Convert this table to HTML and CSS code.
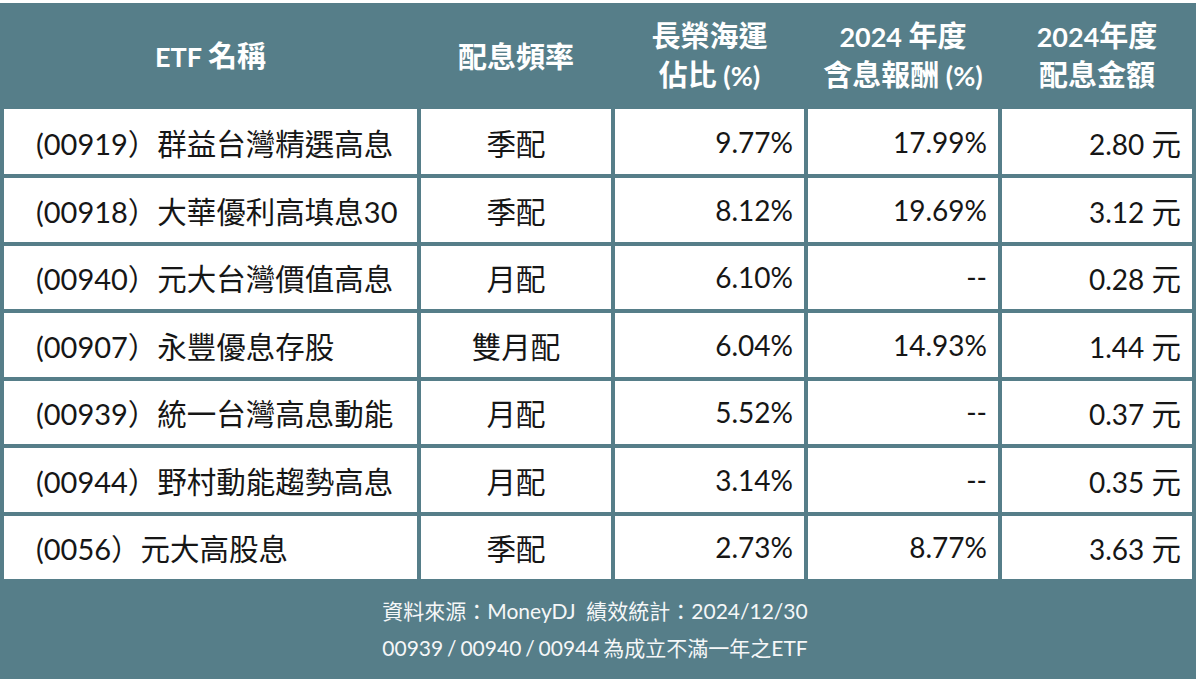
FILE: index.html
```html
<!DOCTYPE html>
<html lang="zh-Hant">
<head>
<meta charset="utf-8">
<title>ETF 配息比較</title>
<link rel="stylesheet" href="styles.css">
</head>
<body>
<div class="board">
  <div class="grid">
    <div class="hd"><span>ETF <span class="k">名稱</span></span></div>
    <div class="hd"><span class="k">配息頻率</span></div>
    <div class="hd"><span><span class="k">長榮海運</span><br><span class="k">佔比</span> (%)</span></div>
    <div class="hd"><span>2024 <span class="k">年度</span><br><span class="k">含息報酬</span> (%)</span></div>
    <div class="hd"><span>2024<span class="k">年度</span><br><span class="k">配息金額</span></span></div>

    <div class="c name"><span>(00919<span class="k">）群益台灣精選高息</span></span></div>
    <div class="c mid"><span class="k">季配</span></div>
    <div class="c num"><span>9.77%</span></div>
    <div class="c num"><span>17.99%</span></div>
    <div class="c num"><span>2.80 <span class="k">元</span></span></div>

    <div class="c name"><span>(00918<span class="k">）大華優利高填息</span>30</span></div>
    <div class="c mid"><span class="k">季配</span></div>
    <div class="c num"><span>8.12%</span></div>
    <div class="c num"><span>19.69%</span></div>
    <div class="c num"><span>3.12 <span class="k">元</span></span></div>

    <div class="c name"><span>(00940<span class="k">）元大台灣價值高息</span></span></div>
    <div class="c mid"><span class="k">月配</span></div>
    <div class="c num"><span>6.10%</span></div>
    <div class="c num"><span>--</span></div>
    <div class="c num"><span>0.28 <span class="k">元</span></span></div>

    <div class="c name"><span>(00907<span class="k">）永豐優息存股</span></span></div>
    <div class="c mid"><span class="k">雙月配</span></div>
    <div class="c num"><span>6.04%</span></div>
    <div class="c num"><span>14.93%</span></div>
    <div class="c num"><span>1.44 <span class="k">元</span></span></div>

    <div class="c name"><span>(00939<span class="k">）統一台灣高息動能</span></span></div>
    <div class="c mid"><span class="k">月配</span></div>
    <div class="c num"><span>5.52%</span></div>
    <div class="c num"><span>--</span></div>
    <div class="c num"><span>0.37 <span class="k">元</span></span></div>

    <div class="c name"><span>(00944<span class="k">）野村動能趨勢高息</span></span></div>
    <div class="c mid"><span class="k">月配</span></div>
    <div class="c num"><span>3.14%</span></div>
    <div class="c num"><span>--</span></div>
    <div class="c num"><span>0.35 <span class="k">元</span></span></div>

    <div class="c name"><span>(0056<span class="k">）元大高股息</span></span></div>
    <div class="c mid"><span class="k">季配</span></div>
    <div class="c num"><span>2.73%</span></div>
    <div class="c num"><span>8.77%</span></div>
    <div class="c num"><span>3.63 <span class="k">元</span></span></div>
  </div>
  <div class="foot">
    <div>資料來源：MoneyDJ&nbsp; 績效統計：2024/12/30</div>
    <div class="tight">00939 / 00940 / 00944 為成立不滿一年之ETF</div>
  </div>
</div>
</body>
</html>
```

FILE: styles.css
```css
html, body {
  margin: 0;
  padding: 0;
  background: #ffffff;
}

body {
  font-family: Lato, "Noto Sans CJK TC", sans-serif;
  color: #161616;
}

.board {
  width: 1196px;
  margin-top: 3px;
  height: 676px;
  background: #567e89;
  display: flex;
  flex-direction: column;
}

.grid {
  display: grid;
  grid-template-columns: 413px 190px 189px 190px 190px;
  grid-template-rows: 102px 65px repeat(6, 63.5px);
  gap: 4px;
  padding: 0 4px;
}

.k {
  font-family: "Noto Sans CJK TC", sans-serif;
}

.hd {
  color: #ffffff;
  font-weight: 700;
  font-size: 27px;
  line-height: 36px;
  text-align: center;
  display: flex;
  align-items: center;
  justify-content: center;
  padding-top: 2px;
}

.hd .k {
  font-size: 29px;
  line-height: 36px;
}

.c {
  background: #ffffff;
  font-size: 28px;
  display: flex;
  align-items: center;
  white-space: nowrap;
}

.c .k {
  font-size: 29.5px;
}

.name {
  padding-left: 32px;
  font-size: 29px;
}

.mid {
  justify-content: center;
}

.num {
  justify-content: flex-end;
  padding-right: 11px;
}

.foot {
  flex: 1;
  display: flex;
  flex-direction: column;
  align-items: center;
  justify-content: center;
  color: #f5f7f8;
  font-size: 21px;
  line-height: 37px;
  padding-right: 6px;
}

.tight {
  word-spacing: -1.5px;
}
```
